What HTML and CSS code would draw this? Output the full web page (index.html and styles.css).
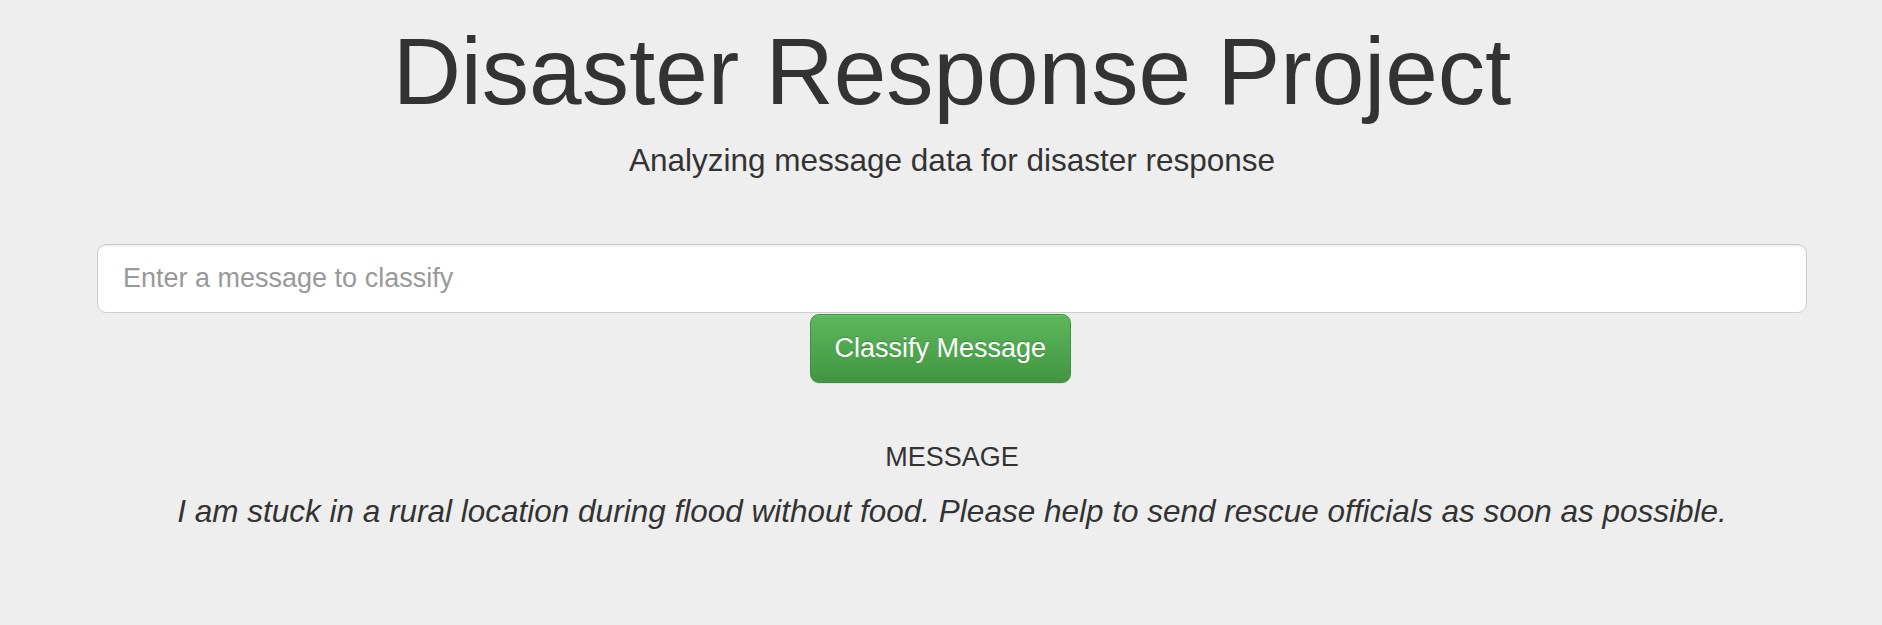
FILE: index.html
```html
<!DOCTYPE html>
<html>
<head>
<meta charset="utf-8">
<title>Disaster Response Project</title>
<link rel="stylesheet" href="styles.css">
</head>
<body>
<div class="jumbotron">
  <div class="container">
    <h1 class="title">Disaster Response Project</h1>
    <p class="lead">Analyzing message data for disaster response</p>
    <form class="query-form" action="#" onsubmit="return false">
      <input type="text" class="query-input" name="query" placeholder="Enter a message to classify">
      <div class="button-offset">
        <button type="submit" class="btn-success">Classify Message</button>
      </div>
    </form>
    <div class="result">
      <h4 class="result-label">MESSAGE</h4>
      <p class="result-text">I am stuck in a rural location during flood without food. Please help to send rescue officials as soon as possible.</p>
    </div>
  </div>
</div>
</body>
</html>
```
FILE: styles.css
```css
html, body {
  margin: 0;
  padding: 0;
  background: #eeeeee;
}
body {
  font-family: "Liberation Sans", Arial, Helvetica, sans-serif;
  color: #333333;
  height: 625px;
  overflow: hidden;
}
.jumbotron {
  background: #eeeeee;
  padding-top: 19px;
}
.container {
  width: 1710px;
  margin-left: 97px;
}
.title {
  margin: 0;
  font-size: 94.5px;
  line-height: 104px;
  font-weight: 500;
  text-align: center;
}
.lead {
  margin: 15px 0 0 0;
  font-size: 31.5px;
  line-height: 44px;
  text-align: center;
}
.query-form {
  margin-top: 62px;
}
.query-input {
  display: block;
  box-sizing: border-box;
  width: 100%;
  height: 69px;
  margin: 0;
  padding: 0 25px;
  font-family: "Liberation Sans", Arial, Helvetica, sans-serif;
  font-size: 27px;
  color: #555555;
  background: #ffffff;
  border: 1px solid #cccccc;
  border-radius: 9px;
  box-shadow: inset 0 1.5px 1.5px rgba(0, 0, 0, 0.075);
  outline: none;
}
.query-input::placeholder {
  color: #999999;
}
.button-offset {
  margin-left: 41.6667%;
  margin-top: 1px;
}
.btn-success {
  box-sizing: border-box;
  height: 69px;
  padding: 0 24px;
  font-family: "Liberation Sans", Arial, Helvetica, sans-serif;
  font-size: 27px;
  color: #ffffff;
  border: 1px solid #3e8f3e;
  border-radius: 9px;
  background: linear-gradient(to bottom, #5cb85c 0%, #419641 100%);
  text-shadow: 0 -1px 0 rgba(0, 0, 0, 0.2);
  box-shadow: inset 0 1px 0 rgba(255, 255, 255, 0.15), 0 1px 1px rgba(0, 0, 0, 0.075);
  cursor: pointer;
}
.result {
  margin-top: 59px;
  text-align: center;
}
.result-label {
  margin: 0;
  font-size: 27px;
  line-height: 30px;
  font-weight: 500;
}
.result-text {
  margin: 17px 0 0 0;
  font-size: 31.5px;
  line-height: 44px;
  font-style: italic;
}
```
